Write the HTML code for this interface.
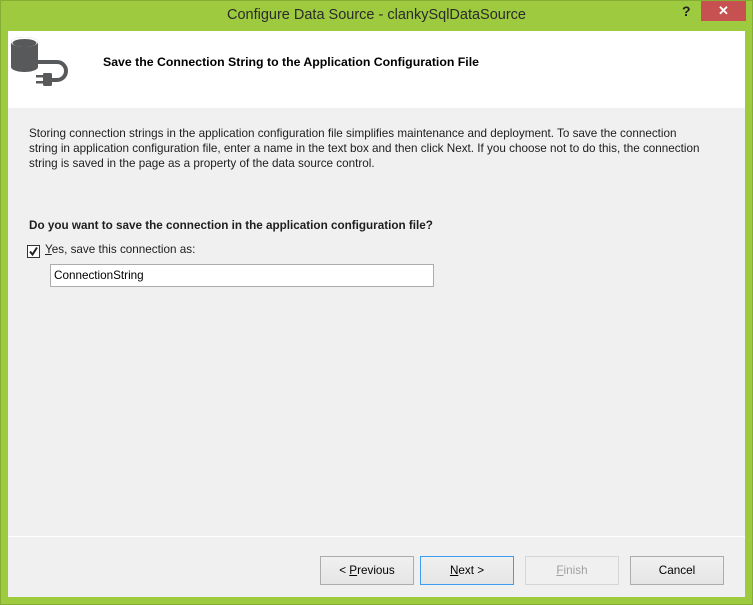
<!DOCTYPE html>
<html><head><style>
*{margin:0;padding:0;box-sizing:border-box}
body{width:753px;height:605px;background:#9dca3e;position:relative;font-family:"Liberation Sans",sans-serif;overflow:hidden}
.frame{position:absolute;left:0;top:0;width:753px;height:605px;border:1px solid #86ad33}
.title{position:absolute;top:7px;left:0;width:753px;text-align:center;font-size:14.5px;color:#2b2b2b}
.help{position:absolute;left:682px;top:3px;font-size:14px;font-weight:bold;color:#222}
.close{position:absolute;left:701px;top:1px;width:45px;height:20px;background:#c75050;color:#fff;text-align:center;font-size:13px;line-height:20px;font-weight:bold}
.client{position:absolute;left:8px;top:31px;width:737px;height:566px;background:#f0f0f0}
.head{position:absolute;left:0;top:0;width:737px;height:77px;background:#fff}
.htitle{position:absolute;left:95px;top:24px;font-size:12.3px;font-weight:bold;color:#000}
.desc{position:absolute;left:21px;top:95px;font-size:11.7px;line-height:15px;color:#1e1e1e;white-space:nowrap}
.q{position:absolute;left:21px;top:188px;font-size:11.7px;font-weight:bold;color:#1e1e1e}
.cb{position:absolute;left:19px;top:214px;width:13px;height:13px;border:1px solid #333;background:#fff}
.cbl{position:absolute;left:37px;top:212px;font-size:11.7px;color:#1e1e1e}
.tb{position:absolute;left:42px;top:233px;width:384px;height:23px;background:#fff;border:1px solid #acacac;font-size:11.7px;padding:4px 0 0 3px;color:#000}
.sep{position:absolute;left:0;top:505px;width:737px;height:1px;background:#fff}
.btn{position:absolute;top:525px;width:94px;height:29px;border:1px solid #acacac;background:linear-gradient(#f0f0f0,#e5e5e5);font-size:11.7px;text-align:center;line-height:27px;color:#000}
u{text-decoration:underline}
</style></head><body>
<div class="frame"></div>
<div class="title">Configure Data Source - clankySqlDataSource</div>
<div class="help">?</div>
<div class="close">✕</div>
<div class="client">
 <div class="head">
  <svg style="position:absolute;left:3px;top:6px" width="64" height="50" viewBox="0 0 64 50">
   <path d="M0 5 a13.5 5 0 0 1 27 0 v25 a13.5 5 0 0 1 -27 0z" fill="#58595b"/>
   <ellipse cx="13.5" cy="5" rx="13.5" ry="5" fill="#fff"/>
   <ellipse cx="13.5" cy="6" rx="12" ry="4" fill="#58595b"/>
   <path d="M27 25 h19 a9 9 0 0 1 0 18 h-6" fill="none" stroke="#58595b" stroke-width="4"/>
   <rect x="32" y="36" width="9" height="13" rx="1.5" fill="#58595b"/>
   <rect x="25" y="38" width="7" height="2.5" fill="#58595b"/>
   <rect x="25" y="44" width="7" height="2.5" fill="#58595b"/>
  </svg>
  <div class="htitle">Save the Connection String to the Application Configuration File</div>
 </div>
 <div class="desc">Storing connection strings in the application configuration file simplifies maintenance and deployment. To save the connection<br>string in application configuration file, enter a name in the text box and then click Next. If you choose not to do this, the connection<br>string is saved in the page as a property of the data source control.</div>
 <div class="q">Do you want to save the connection in the application configuration file?</div>
 <div class="cb"><svg width="11" height="11" viewBox="0 0 11 11" style="position:absolute;left:0;top:0"><path d="M2 5.5 L4.5 8.5 L9 1.5" stroke="#222" stroke-width="2" fill="none"/></svg></div>
 <div class="cbl"><u>Y</u>es, save this connection as:</div>
 <div class="tb">ConnectionString</div>
 <div class="sep"></div>
 <div class="btn" style="left:312px">&lt; <u>P</u>revious</div>
 <div class="btn" style="left:412px;border-color:#3c9ef0"><u>N</u>ext &gt;</div>
 <div class="btn" style="left:517px;border-color:#d5d5d5;color:#a0a0a0;background:#f0f0f0"><u>F</u>inish</div>
 <div class="btn" style="left:622px">Cancel</div>
</div>
</body></html>
